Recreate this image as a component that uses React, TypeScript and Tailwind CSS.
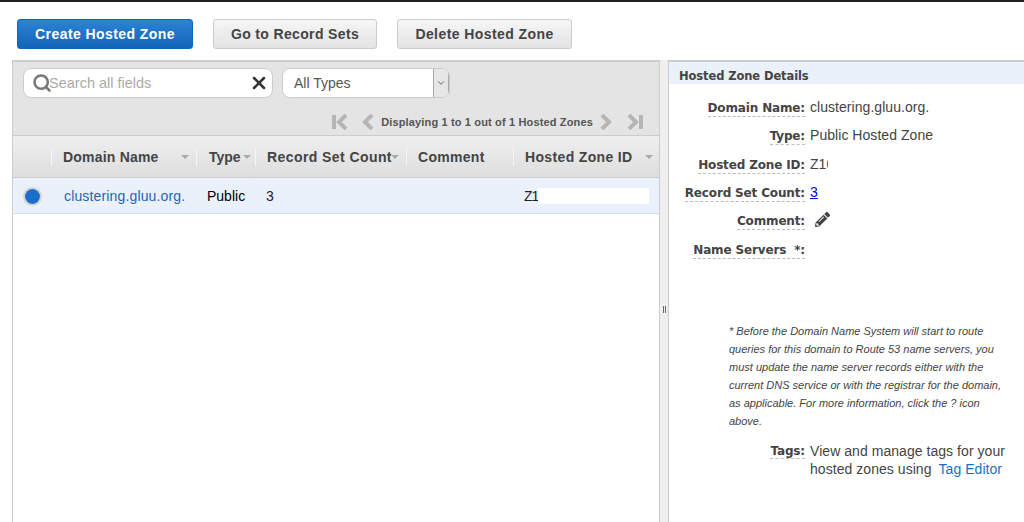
import { Search, X, ChevronDown } from "lucide-react";
import { FaPencilAlt } from "react-icons/fa";

function SortArrow({ className = "" }: { className?: string }) {
  return (
    <span
      className={`inline-block h-0 w-0 border-x-[4px] border-t-[4px] border-x-transparent border-t-[#aaa] ${className}`}
    />
  );
}

function PagerIcon({ dir, end }: { dir: "left" | "right"; end?: boolean }) {
  const flip = dir === "right" ? "-scale-x-100" : "";
  return (
    <svg width={end ? 17 : 12} height="16" viewBox={end ? "0 0 17 16" : "0 0 12 16"} className={flip}>
      {end && <rect x="0" y="1" width="4" height="14" fill="#b5b5b5" />}
      <path
        d={end ? "M14 1 L7 8 L14 15" : "M10 1 L3 8 L10 15"}
        fill="none"
        stroke="#b5b5b5"
        strokeWidth="4"
      />
    </svg>
  );
}

function Detail({ label, children, h }: { label: string; children?: React.ReactNode; h: string }) {
  return (
    <div className={`flex items-start ${h}`}>
      <div className="w-[136px] shrink-0 text-right leading-[15px]">
        <span className="border-b border-dashed border-[#bbb] pb-[1px] font-['DejaVu_Sans',sans-serif] text-[12px] leading-[15px] font-bold tracking-[-0.15px] text-[#444]">
          {label}
        </span>
      </div>
      <div className="pl-[5px] text-[14px] leading-[17px] tracking-[0.05px] text-[#444]">{children}</div>
    </div>
  );
}

export default function App() {
  return (
    <div className="flex h-[522px] w-[1024px] flex-col overflow-hidden border-t-2 border-[#222] bg-white font-['Liberation_Sans',sans-serif]">
      <div className="flex h-[58px] items-start gap-5 pt-[17px] pl-[17px]">
        <button className="h-[30px] w-[176px] rounded-[3px] border border-[#1166bb] bg-gradient-to-b from-[#2b83d6] to-[#1364b7] text-[14px] font-bold tracking-[0.42px] text-white">
          Create Hosted Zone
        </button>
        <button className="h-[30px] w-[164px] rounded-[3px] border border-[#ccc] bg-gradient-to-b from-[#f6f6f6] to-[#e3e3e3] text-[14px] font-bold tracking-[0.35px] text-[#444]">
          Go to Record Sets
        </button>
        <button className="h-[30px] w-[175px] rounded-[3px] border border-[#ccc] bg-gradient-to-b from-[#f6f6f6] to-[#e3e3e3] text-[14px] font-bold tracking-[0.42px] text-[#444]">
          Delete Hosted Zone
        </button>
      </div>

      <div className="flex min-h-0 flex-1 pl-3">
        <div className="flex w-[648px] shrink-0 flex-col border-t-2 border-r border-l border-[#ccc]">
          <div className="h-[73px] bg-[#e4e4e4] pt-[6px] pl-[10px]">
            <div className="flex gap-[9px]">
              <div className="flex h-[30px] w-[250px] items-center rounded-[8px] border border-[#ccc] bg-white pr-[3px] pl-2">
                <Search size={20} strokeWidth={3} className="-mr-[3px] shrink-0 text-[#777]" />
                <span className="flex-1 pt-[1px] text-[14.5px] text-[#aaa]">Search all fields</span>
                <X size={20} strokeWidth={3} className="text-[#333]" />
              </div>
              <div className="flex h-[30px] w-[168px] items-center overflow-hidden rounded-[8px] border border-[#ccc] bg-white">
                <span className="flex-1 pl-[11px] text-[14px] text-[#555]">All Types</span>
                <div className="flex h-full w-[16px] items-center justify-center border-x border-[#aaa] bg-[#e6e6e6]">
                  <ChevronDown size={10} className="text-[#444]" />
                </div>
              </div>
            </div>
            <div className="mt-[14px] flex h-[20px] items-center justify-end pr-[16px]">
              <PagerIcon dir="left" end />
              <span className="w-[13px]" />
              <PagerIcon dir="left" />
              <span className="ml-[7px] text-[11px] font-bold tracking-[0.15px] text-[#555]">
                Displaying 1 to 1 out of 1 Hosted Zones
              </span>
              <span className="w-[7px]" />
              <PagerIcon dir="right" />
              <span className="w-[14px]" />
              <PagerIcon dir="right" end />
            </div>
          </div>

          <div className="flex h-[43px] items-center border-y border-[#ccc] bg-gradient-to-b from-[#efefef] to-[#dedede] text-[14px] leading-[18px] font-bold text-[#444]">
            <div className="h-[18px] w-[39px] border-r border-[#f6f6f6]" />
            <div className="flex h-[18px] w-[145px] items-center justify-between border-r border-[#f6f6f6] pr-[7px] pl-[11px] tracking-[0.2px]">
              Domain Name
              <SortArrow />
            </div>
            <div className="flex h-[18px] w-[59px] items-center border-r border-[#f6f6f6] pl-[12px]">
              Type
              <SortArrow className="ml-[2px]" />
            </div>
            <div className="flex h-[18px] w-[151px] items-center border-r border-[#f6f6f6] pl-[11px] tracking-[0.42px] whitespace-nowrap">
              Record Set Count
              <SortArrow className="-ml-[1px]" />
            </div>
            <div className="h-[18px] w-[107px] border-r border-[#f6f6f6] pl-[11px] tracking-[0.3px]">Comment</div>
            <div className="flex h-[18px] flex-1 items-center justify-between pr-[6px] pl-[11px] tracking-[0.35px]">
              Hosted Zone ID
              <SortArrow />
            </div>
          </div>

          <div className="flex h-[36px] items-center border-b border-[#ddd] bg-[#eaf1fb] pt-[1px] text-[14px] text-[#222]">
            <div className="flex w-[39px] justify-start pl-[10px]">
              <span className="flex h-[19px] w-[19px] items-center justify-center rounded-full border-2 border-[#d5d5d5] bg-white">
                <span className="h-[15px] w-[15px] shrink-0 rounded-full bg-[#1a6fca]" />
              </span>
            </div>
            <div className="w-[143px] pl-[12px] tracking-[0.15px] whitespace-nowrap text-[#1b67b3]">clustering.gluu.org.</div>
            <div className="w-[59px] pl-[12px] text-black">Public</div>
            <div className="w-[258px] pl-[12px]">3</div>
            <div className="flex items-center pl-[12px]">
              <span className="tracking-[-1px]">Z1</span>
              <span className="ml-[0px] h-[16px] w-[111px] bg-white" />
            </div>
          </div>
          <div className="flex-1 bg-white" />
        </div>

        <div className="flex w-[9px] shrink-0 items-center justify-center gap-px border-r border-[#ccc] bg-[#efefef] pt-[36px]">
          <span className="h-[7px] w-px bg-[#666]" />
          <span className="h-[7px] w-px bg-[#666]" />
        </div>

        <div className="min-w-0 flex-1 border-t-2 border-[#ccc]">
          <div className="h-[22px] bg-[#eaf1fb] pt-[7px] pl-[10px] font-['DejaVu_Sans',sans-serif] text-[11.5px] leading-[15px] font-bold tracking-[-0.1px] text-[#444]">
            Hosted Zone Details
          </div>
          <div className="pt-[15px]">
            <Detail label="Domain Name:" h="h-[28px]">clustering.gluu.org.</Detail>
            <Detail label="Type:" h="h-[29px]">Public Hosted Zone</Detail>
            <Detail label="Hosted Zone ID:" h="h-[28px]">
              <span className="inline-block w-[18px] overflow-hidden">Z10</span>
            </Detail>
            <Detail label="Record Set Count:" h="h-[28px]">
              <span className="text-[#0000ee] underline">3</span>
            </Detail>
            <Detail label="Comment:" h="h-[29px]">
              <FaPencilAlt size={15} className="ml-[5px] text-[#444]" />
            </Detail>
            <Detail label={"Name Servers\u00a0 *:"} h="h-[81px]" />
          </div>
          <div className="ml-[60px] w-[280px] text-[11px] leading-[18px] text-[#444] italic">
            * Before the Domain Name System will start to route queries for this domain to Route 53 name servers, you must update the name server records either with the current DNS service or with the registrar for the domain, as applicable. For more information, click the ? icon above.
          </div>
          <div className="mt-[12px] flex items-start">
            <div className="w-[136px] shrink-0 text-right leading-[15px]">
              <span className="border-b border-dashed border-[#bbb] font-['DejaVu_Sans',sans-serif] text-[12px] leading-[15px] font-bold tracking-[-0.15px] text-[#444]">
                Tags:
              </span>
            </div>
            <div className="w-[205px] pl-[5px] text-[14px] leading-[18px] tracking-[0.05px] text-[#444]">
              View and manage tags for your hosted zones using{" "}
              <span className="ml-[3px] text-[#1b6fc2]">Tag Editor</span>
            </div>
          </div>
        </div>
      </div>
    </div>
  );
}
